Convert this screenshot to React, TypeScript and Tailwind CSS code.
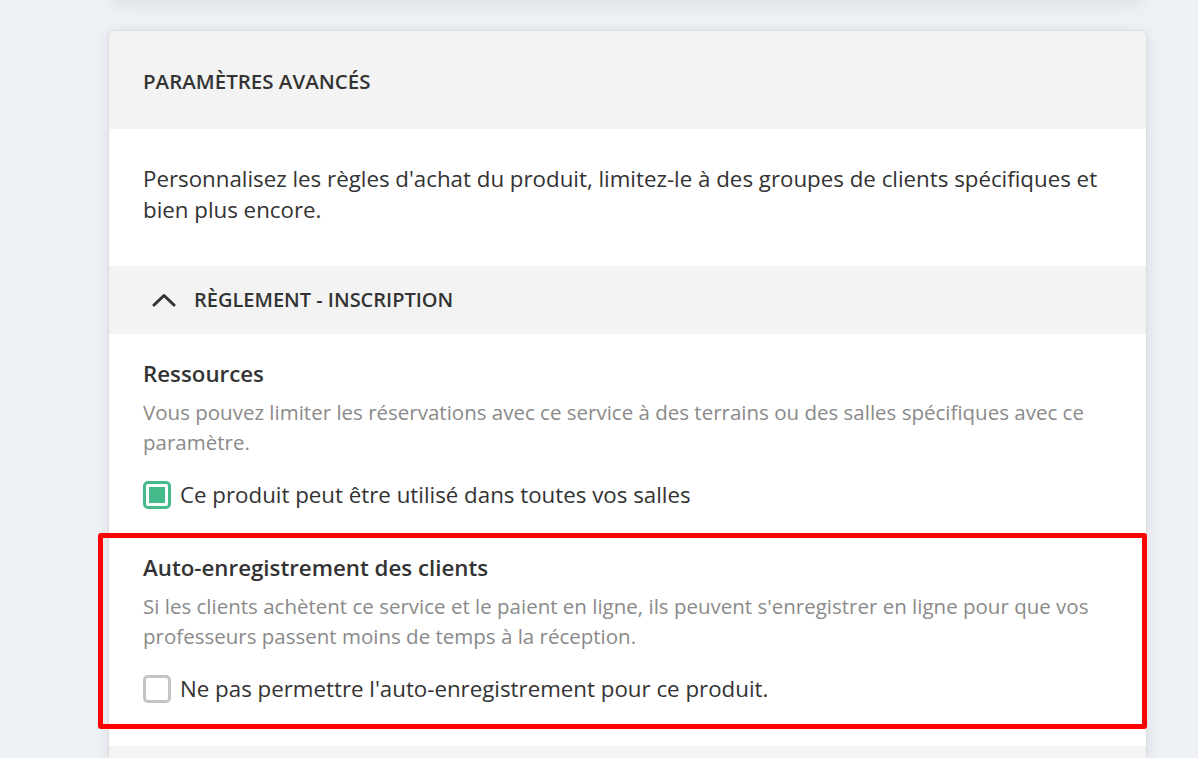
import React from 'react';

function ChevronUp() {
  return (
    <svg width="24" height="16" viewBox="0 0 24 16" fill="none" aria-hidden="true">
      <polyline points="2,13 12,3.5 22,13" stroke="#333333" strokeWidth="3" strokeLinecap="round" strokeLinejoin="round" />
    </svg>
  );
}

function Checkbox({ checked }: { checked: boolean }) {
  if (checked) {
    return (
      <span className="flex h-[28px] w-[28px] shrink-0 items-center justify-center rounded-[5px] border-[3px] border-[#45bb8c] bg-white">
        <span className="h-[16px] w-[16px] bg-[#45bb8c]" />
      </span>
    );
  }
  return <span className="h-[28px] w-[28px] shrink-0 rounded-[5px] border-[3px] border-[#c4c4c4] bg-white" />;
}

interface SettingProps {
  title: string;
  description: string;
  label: string;
  checked: boolean;
  highlighted?: boolean;
}

function Setting({ title, description, label, checked, highlighted }: SettingProps) {
  return (
    <section className={`relative bg-white px-[34px] pt-[26px] ${highlighted ? 'pb-[43px]' : 'pb-[19px]'}`}>
      {highlighted && (
        <div className="pointer-events-none absolute -left-[11px] -right-[1px] top-[5px] h-[196px] rounded-[3px] border-[5px] border-[#ff0000]" />
      )}
      <h3 className="text-[22.3px] font-semibold leading-[28px] text-[#333333]">{title}</h3>
      <p className="mt-[9px] pr-[20px] text-[20.5px] leading-[30px] text-[#8a8a8a]">{description}</p>
      <label className="mt-[24px] flex items-center gap-[9px]">
        <Checkbox checked={checked} />
        <span className="text-[22.3px] leading-[28px] text-[#333333]">{label}</span>
      </label>
    </section>
  );
}

export default function App() {
  return (
    <div className="flex h-[758px] flex-col overflow-hidden bg-[#edf0f4] font-['Open_Sans',sans-serif]">
      <div className="ml-[112px] -mt-[44px] h-[40px] w-[1030px] shrink-0 rounded-[8px] bg-white shadow-[0_6px_18px_rgba(30,40,60,0.10)]" />

      <div className="ml-[108px] mt-[34px] w-[1039px] shrink-0 rounded-[7px] border border-[#dcdcdc] bg-white shadow-[0_2px_14px_rgba(30,40,60,0.08)]">
        <div className="flex h-[98px] items-center rounded-t-[7px] bg-[#f3f3f3] px-[34px] pt-[2px]">
          <h2 className="text-[20.5px] font-semibold uppercase text-[#333333]">Paramètres avancés</h2>
        </div>

        <div className="bg-white px-[34px] pb-[41px] pt-[34px]">
          <p className="text-[22.3px] leading-[31px] text-[#333333]">
            Personnalisez les règles d'achat du produit, limitez-le à des groupes de clients spécifiques et bien plus encore.
          </p>
        </div>

        <div className="flex h-[68px] items-center gap-[18px] bg-[#f3f3f3] pl-[43px]">
          <ChevronUp />
          <h3 className="text-[20px] font-semibold uppercase text-[#333333]">Règlement - Inscription</h3>
        </div>

        <Setting
          title="Ressources"
          description="Vous pouvez limiter les réservations avec ce service à des terrains ou des salles spécifiques avec ce paramètre."
          label="Ce produit peut être utilisé dans toutes vos salles"
          checked
        />

        <Setting
          title="Auto-enregistrement des clients"
          description="Si les clients achètent ce service et le paient en ligne, ils peuvent s'enregistrer en ligne pour que vos professeurs passent moins de temps à la réception."
          label="Ne pas permettre l'auto-enregistrement pour ce produit."
          checked={false}
          highlighted
        />

        <div className="h-[68px] bg-[#f3f3f3]" />
      </div>
    </div>
  );
}
